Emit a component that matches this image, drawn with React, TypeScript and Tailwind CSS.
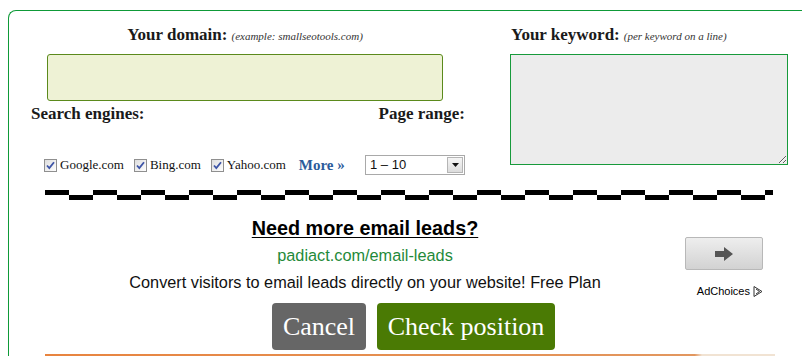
import React from "react";

const serif = "font-['Liberation_Serif',serif]";
const sans = "font-['Liberation_Sans',Arial,sans-serif]";

function Check({ label }: { label: string }) {
  return (
    <span className="flex items-center">
      <svg width="13" height="13" viewBox="0 0 13 13" className="shrink-0">
        <defs>
          <linearGradient id="cb" x1="0" y1="0" x2="1" y2="1">
            <stop offset="0" stopColor="#dcdcdc" />
            <stop offset="1" stopColor="#ffffff" />
          </linearGradient>
        </defs>
        <rect x="0.5" y="0.5" width="12" height="12" fill="url(#cb)" stroke="#8f8f8f" />
        <path d="M3 6.5 L5.3 9 L10 3.2" fill="none" stroke="#3d54a6" strokeWidth="1.8" />
      </svg>
      <span className="ml-[3px] text-[13px] leading-[16px] text-[#111]">{label}</span>
    </span>
  );
}

function Dashes() {
  return (
    <svg width="728" height="10" className="block">
      <defs>
        <pattern id="dash" width="48" height="10" patternUnits="userSpaceOnUse">
          <rect x="0" y="0" width="24" height="5" fill="#000" />
          <rect x="24" y="5" width="24" height="5" fill="#000" />
        </pattern>
      </defs>
      <rect width="728" height="10" fill="url(#dash)" />
    </svg>
  );
}

export default function App() {
  return (
    <div className={`h-[356px] w-[802px] overflow-hidden bg-white pl-[8px] pt-[10px] ${serif}`}>
      <div className="h-[400px] rounded-tl-[8px] border-l border-t border-[#0e9a38]">
        <div className="flex h-[179px]">
          {/* left column */}
          <div className="w-[472px]">
            <div className="pt-[14px] text-center leading-[20px] text-[#1a1a1a]">
              <span className="text-[17px] font-bold">Your domain:</span>{" "}
              <span className="text-[11px] italic text-[#333]">(example: smallseotools.com)</span>
            </div>
            <div className="ml-[38px] mt-[8px] h-[47px] w-[396px] rounded-[3px] border border-[#5b8a1c] bg-[#eef2d5]" />
            <div className="mt-[3px] flex justify-between pl-[22px] pr-[16px] text-[17px] font-bold leading-[20px] text-[#1a1a1a]">
              <span>Search engines:</span>
              <span>Page range:</span>
            </div>
            <div className="mt-[31px] flex h-[20px] items-center pl-[35px] pr-[16px]">
              <Check label="Google.com" />
              <span className="ml-[10px]">
                <Check label="Bing.com" />
              </span>
              <span className="ml-[10px]">
                <Check label="Yahoo.com" />
              </span>
              <span className="ml-[13px] text-[15px] font-bold leading-[16px] text-[#2c5b9b]">More »</span>
              <div className="ml-auto flex h-[20px] w-[100px] items-center border border-[#a9a9a9] bg-white">
                <span className={`flex-1 pl-[4px] text-[13px] leading-[16px] text-[#111] ${sans}`}>1 – 10</span>
                <span className="mr-[1px] flex h-[16px] w-[16px] items-center justify-center border border-[#b5b5b5] bg-[linear-gradient(#f5f5f5,#dcdcdc)]">
                  <svg width="7" height="4" viewBox="0 0 7 4">
                    <path d="M0 0 H7 L3.5 4 Z" fill="#111" />
                  </svg>
                </span>
              </div>
            </div>
          </div>
          {/* right column */}
          <div className="ml-[29px] w-[278px]">
            <div className="pl-[1px] pt-[14px] leading-[20px] text-[#1a1a1a]">
              <span className="text-[17px] font-bold">Your keyword:</span>{" "}
              <span className="text-[11px] italic text-[#333]">(per keyword on a line)</span>
            </div>
            <textarea
              readOnly
              className="mt-[8px] block h-[111px] w-[278px] border border-[#179a3b] bg-[#ececec] outline-none"
            />
          </div>
        </div>

        <div className="ml-[36px]">
          <Dashes />
        </div>

        {/* ad */}
        <div className={`ml-[36px] flex h-[103px] ${sans}`}>
          <div className="w-[640px] text-center">
            <div className="mt-[17px] text-[19.8px] font-bold leading-[22px] text-black underline underline-offset-[2px]">
              Need more email leads?
            </div>
            <div className="mt-[7px] text-[16.3px] leading-[18px] text-[#1f8a3a]">padiact.com/email-leads</div>
            <div className="mt-[9px] text-[16.3px] leading-[18px] text-[#111]">
              Convert visitors to email leads directly on your website! Free Plan
            </div>
          </div>
          <div className="flex flex-col items-end">
            <div className="mt-[37px] flex h-[33px] w-[78px] items-center justify-center rounded-[2px] border border-[#b8b8b8] bg-[linear-gradient(#eeeeee,#d2d2d2)]">
              <svg width="18" height="14" viewBox="0 0 18 14">
                <path d="M0 4 H9 V0 L18 7 L9 14 V10 H0 Z" fill="#555" />
              </svg>
            </div>
            <div className="mt-[14px] flex items-center text-[11px] leading-[14px] text-black">
              AdChoices
              <svg width="10" height="11" viewBox="0 0 10 11" className="ml-[3px]">
                <path d="M1 0.5 V10.5 M1 0.5 L9 5.5 L1 10.5" fill="none" stroke="#333" strokeWidth="1" />
                <path d="M3 3 L6.5 5.5 L3 8" fill="none" stroke="#333" strokeWidth="1" />
              </svg>
            </div>
          </div>
        </div>

        <div className="ml-[263px] flex gap-[11px]">
          <button className="h-[47px] w-[94px] rounded-[4px] bg-[#666666] text-[26px] leading-[30px] text-white">
            Cancel
          </button>
          <button className="h-[47px] w-[178px] rounded-[4px] bg-[#4a7a04] text-[26px] leading-[30px] text-white">
            Check position
          </button>
        </div>

        <div className="ml-[36px] mt-[4px] h-[2px] w-[730px] bg-[linear-gradient(to_right,#e8843f_0%,#e2975f_89%,#f1e3d3_90%,#f1e3d3_100%)]" />
      </div>
    </div>
  );
}
